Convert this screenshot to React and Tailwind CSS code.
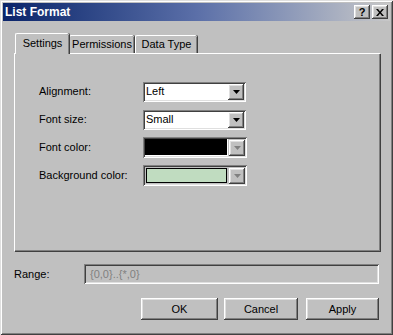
import React from 'react'

const raised = 'shadow-[inset_-1px_-1px_#404040,inset_1px_1px_#ffffff,inset_-2px_-2px_#808080,inset_2px_2px_#dfdfdf]'
const sunken = 'shadow-[inset_1px_1px_#808080,inset_-1px_-1px_#ffffff,inset_2px_2px_#404040,inset_-2px_-2px_#dfdfdf]'

function Arrow({ gray }) {
  return (
    <svg width="7" height="4" viewBox="0 0 7 4">
      <path d="M0 0h7L3.5 4z" fill={gray ? '#808080' : '#000000'} />
    </svg>
  )
}

function DropBtn({ gray }) {
  return (
    <div className={`flex h-[16px] w-[16px] items-center justify-center bg-[#c0c0c0] ${raised}`}>
      <Arrow gray={gray} />
    </div>
  )
}

function Combo({ value }) {
  return (
    <div className={`flex h-[20px] w-[103px] items-center bg-white p-[2px] ${sunken}`}>
      <div className="flex-1 pl-[1px] text-[11px] leading-none">{value}</div>
      <DropBtn />
    </div>
  )
}

function ColorCombo({ color }) {
  return (
    <div className={`flex h-[21px] w-[104px] items-center gap-[1px] bg-[#c0c0c0] p-[2px] ${sunken}`}>
      {color === 'black' ? (
        <div className="h-[17px] flex-1 border-r border-b border-white bg-black" />
      ) : (
        <div className="m-[1px] h-[15px] flex-1 border border-black bg-[#c0dcc0]" />
      )}
      <DropBtn gray />
    </div>
  )
}

function Tab({ label, active, w }) {
  if (active) {
    return (
      <div className={`relative z-10 mb-[-1px] flex h-[21px] ${w} items-center justify-center rounded-t-[2px] border-t border-l border-white bg-[#c0c0c0] pb-[2px] shadow-[inset_-1px_0_#808080,1px_0_#404040]`}>
        {label}
      </div>
    )
  }
  return (
    <div className={`flex h-[18px] ${w} items-center justify-center rounded-t-[2px] border-t border-l border-white bg-[#c0c0c0] shadow-[inset_-1px_0_#808080,1px_0_#404040]`}>
      {label}
    </div>
  )
}

function Row({ label, children }) {
  return (
    <div className="flex h-[21px] items-center">
      <div className="w-[104px]">{label}</div>
      {children}
    </div>
  )
}

function Button({ children, w }) {
  return (
    <button className={`flex h-[22px] ${w} items-center justify-center bg-[#c0c0c0] text-[11px] ${raised}`}>
      {children}
    </button>
  )
}

export default function App() {
  return (
    <div
      className="flex h-[335px] w-[393px] flex-col bg-[#c0c0c0] p-[3px] text-[11px] text-black shadow-[inset_1px_1px_#dfdfdf,inset_-1px_-1px_#404040,inset_2px_2px_#ffffff,inset_-2px_-2px_#808080]"
      style={{ fontFamily: '"Liberation Sans", Arial, sans-serif' }}
    >
      {/* title bar */}
      <div className="flex h-[18px] items-center justify-between bg-gradient-to-r from-[#0a246a] via-[#5b6fa8] to-[#c8c8c8] pr-[2px] pl-[2px]">
        <span className="text-[12px] font-bold text-white">List Format</span>
        <div className="flex gap-[2px]">
          <div className={`flex h-[14px] w-[16px] items-center justify-center bg-[#c0c0c0] text-[11px] font-bold leading-none ${raised}`}>?</div>
          <div className={`flex h-[14px] w-[16px] items-center justify-center bg-[#c0c0c0] ${raised}`}>
            <svg width="8" height="7" viewBox="0 0 8 7">
              <path d="M0 0h2l2 2.5L6 0h2L5 3.5 8 7H6L4 4.5 2 7H0l3-3.5z" fill="#000" />
            </svg>
          </div>
        </div>
      </div>

      <div className="flex flex-1 flex-col pt-[12px] pl-[11px]">
        {/* tabs */}
        <div className="flex items-end pl-[1px]">
          <Tab label="Settings" active w="w-[54px]" />
          <Tab label="Permissions" w="w-[65px]" />
          <div className="w-[1px]" />
          <Tab label="Data Type" w="w-[62px]" />
        </div>

        {/* panel */}
        <div className="flex h-[198px] w-[366px] flex-col gap-[7px] border-t border-l border-white pt-[27px] pl-[24px] shadow-[inset_-1px_-1px_#808080,1px_1px_#404040]">
          <Row label="Alignment:"><Combo value="Left" /></Row>
          <Row label="Font size:"><Combo value="Small" /></Row>
          <Row label="Font color:"><ColorCombo color="black" /></Row>
          <Row label="Background color:"><ColorCombo color="green" /></Row>
        </div>

        {/* range */}
        <div className="mt-[13px] flex h-[20px] items-center">
          <div className="w-[70px]">Range:</div>
          <div className={`flex h-[20px] w-[295px] items-center bg-[#c0c0c0] pl-[6px] text-[#808080] ${sunken}`}>
            {'{0,0}..{*,0}'}
          </div>
        </div>

        {/* buttons */}
        <div className="mt-[14px] flex pl-[127px]">
          <Button w="w-[77px]">OK</Button>
          <div className="w-[6px]" />
          <Button w="w-[74px]">Cancel</Button>
          <div className="w-[8px]" />
          <Button w="w-[73px]">Apply</Button>
        </div>
      </div>
    </div>
  )
}
